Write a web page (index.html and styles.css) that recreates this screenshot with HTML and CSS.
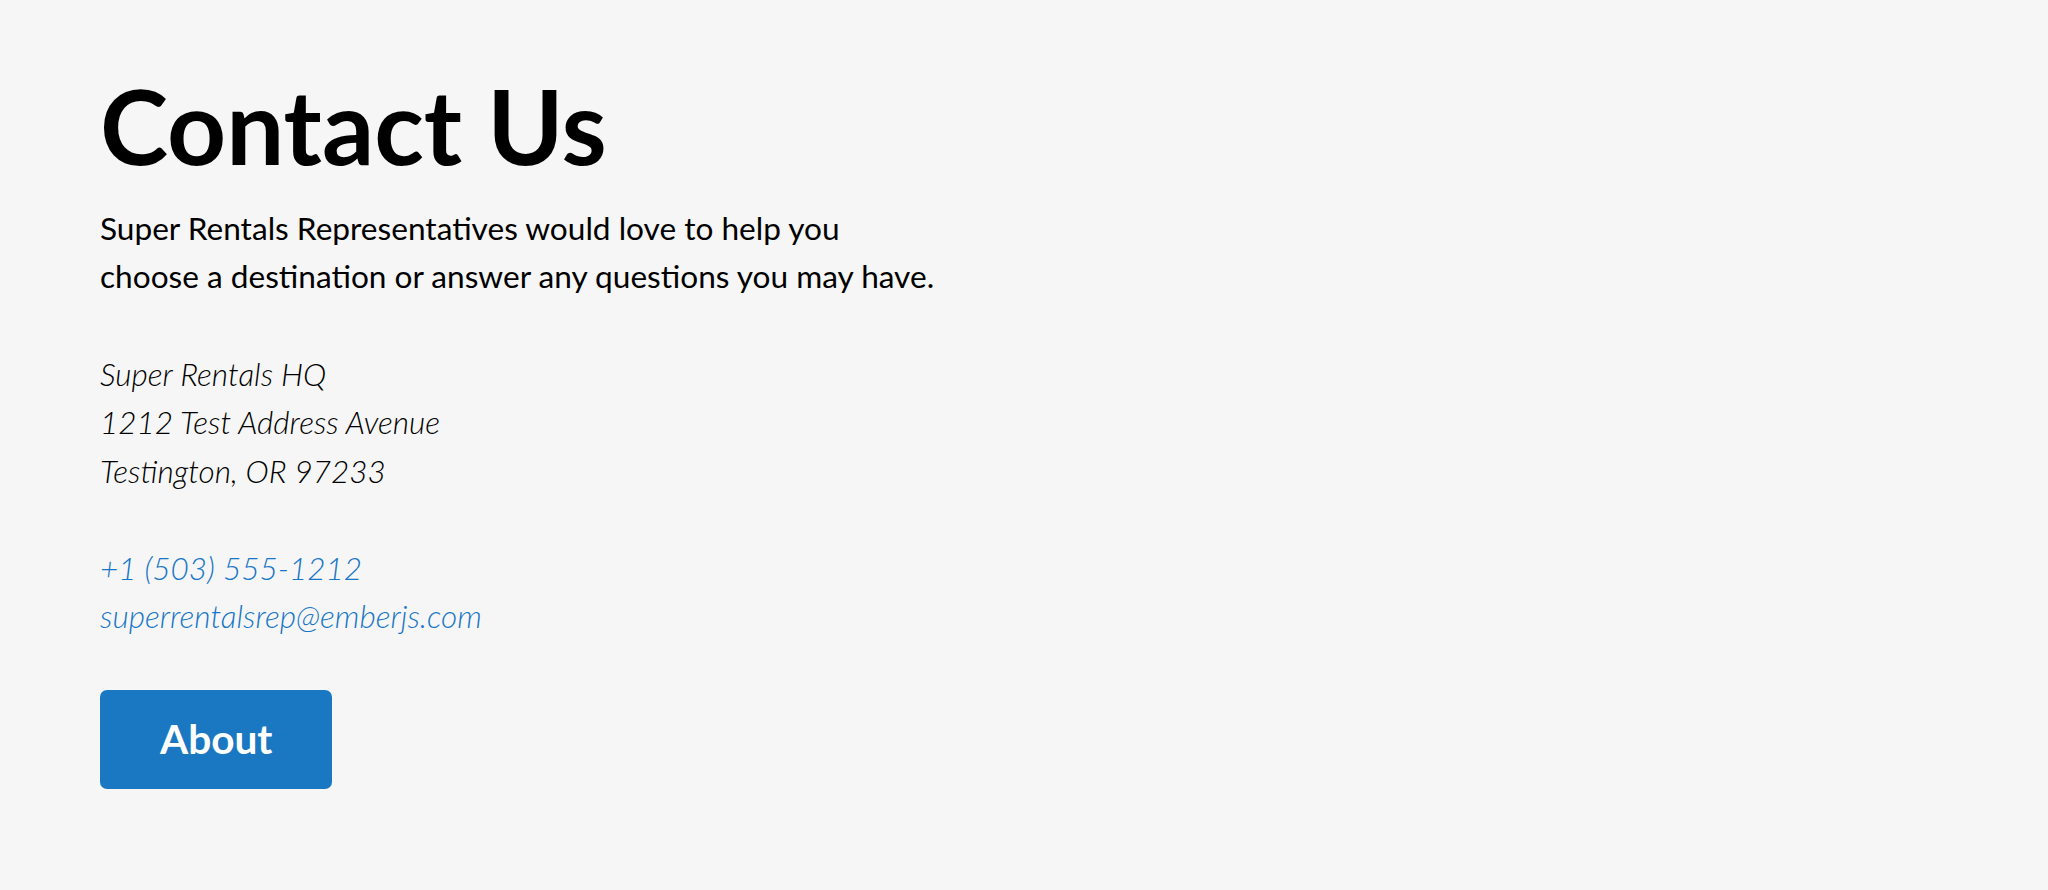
FILE: index.html
```html
<!DOCTYPE html>
<html lang="en">
<head>
  <meta charset="UTF-8">
  <meta name="viewport" content="width=device-width, initial-scale=1">
  <title>Contact Us</title>
  <link rel="stylesheet" href="styles.css">
</head>
<body>

<div class="container">
  <h1>Contact Us</h1>
  <p class="intro">
    Super Rentals Representatives would love to help you<br>
    choose a destination or answer any questions you may have.
  </p>

  <address>
    Super Rentals HQ
    <p>
      1212 Test Address Avenue<br>
      Testington, OR 97233
    </p>
    <a href="tel:503.555.1212">+1 (503) 555-1212</a><br>
    <a href="mailto:superrentalsrep@emberjs.com">superrentalsrep@emberjs.com</a>
  </address>

  <a href="#" class="button">About</a>
</div>

</body>
</html>
```

FILE: styles.css
```css
* { box-sizing: border-box; }
body {
  margin: 0;
  background: #f6f6f6;
  color: #000;
  font-family: Lato, "Noto Sans", sans-serif;
}
.container {
  padding: 64px 100px;
}
h1 {
  margin: 0;
  font-size: 103px;
  font-weight: 700;
  line-height: 1.2;
}
.intro {
  margin: 16px 0 49px;
  font-size: 31.6px;
  line-height: 48.5px;
}
address {
  font-size: 31.5px;
  font-weight: 300;
  font-style: italic;
  line-height: 48.5px;
}
address p {
  margin: 0 0 48.5px;
}
address a {
  color: #1976c6;
  text-decoration: none;
}
.button {
  display: inline-block;
  margin-top: 49px;
  padding: 25px 60px 26px;
  border-radius: 7px;
  background-color: #1a78c2;
  color: #fff;
  font-size: 40.6px;
  font-weight: 700;
  line-height: 1.2;
  text-decoration: none;
}
```
